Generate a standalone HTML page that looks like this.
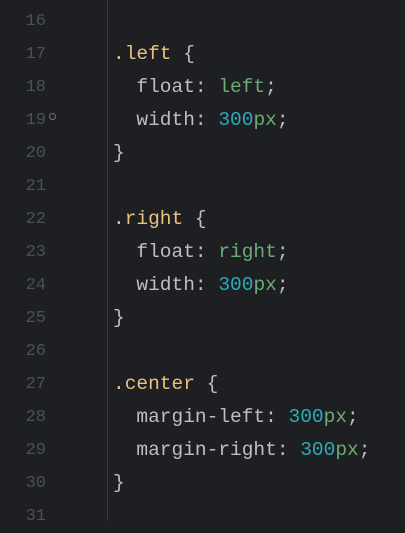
<!DOCTYPE html>
<html><head><style>
html,body{margin:0;padding:0;background:#1e1f22;width:405px;height:521px;overflow:hidden}
.g{position:absolute;left:107px;top:0;width:1px;height:521px;background:#393b40}
.l{position:absolute;left:0;height:33px;line-height:33px;font-family:"Liberation Mono",monospace;font-size:19.5px;white-space:pre}
.n{position:absolute;left:0;width:46px;text-align:right;color:#4b5059;font-size:17px}
.c{position:absolute;left:113px;color:#bcbec4}
.s{color:#e8c27c}.v{color:#6aab73}.k{color:#2aacb8}
.dot{position:absolute;left:49px;top:9px;width:5px;height:5px;border:1px solid #6f737a;border-radius:50%}
</style></head><body>
<div class="g"></div>
<div class="l" style="top:5px"><span class="n">16</span></div>
<div class="l" style="top:38px"><span class="n">17</span><span class="c"><span class="s">.left</span> {</span></div>
<div class="l" style="top:71px"><span class="n">18</span><span class="c">  float: <span class="v">left</span>;</span></div>
<div class="l" style="top:104px"><span class="n">19</span><span class="dot"></span><span class="c">  width: <span class="k">300</span><span class="v">px</span>;</span></div>
<div class="l" style="top:137px"><span class="n">20</span><span class="c">}</span></div>
<div class="l" style="top:170px"><span class="n">21</span></div>
<div class="l" style="top:203px"><span class="n">22</span><span class="c"><span class="s">.right</span> {</span></div>
<div class="l" style="top:236px"><span class="n">23</span><span class="c">  float: <span class="v">right</span>;</span></div>
<div class="l" style="top:269px"><span class="n">24</span><span class="c">  width: <span class="k">300</span><span class="v">px</span>;</span></div>
<div class="l" style="top:302px"><span class="n">25</span><span class="c">}</span></div>
<div class="l" style="top:335px"><span class="n">26</span></div>
<div class="l" style="top:368px"><span class="n">27</span><span class="c"><span class="s">.center</span> {</span></div>
<div class="l" style="top:401px"><span class="n">28</span><span class="c">  margin-left: <span class="k">300</span><span class="v">px</span>;</span></div>
<div class="l" style="top:434px"><span class="n">29</span><span class="c">  margin-right: <span class="k">300</span><span class="v">px</span>;</span></div>
<div class="l" style="top:467px"><span class="n">30</span><span class="c">}</span></div>
<div class="l" style="top:500px"><span class="n">31</span></div>
</body></html>
